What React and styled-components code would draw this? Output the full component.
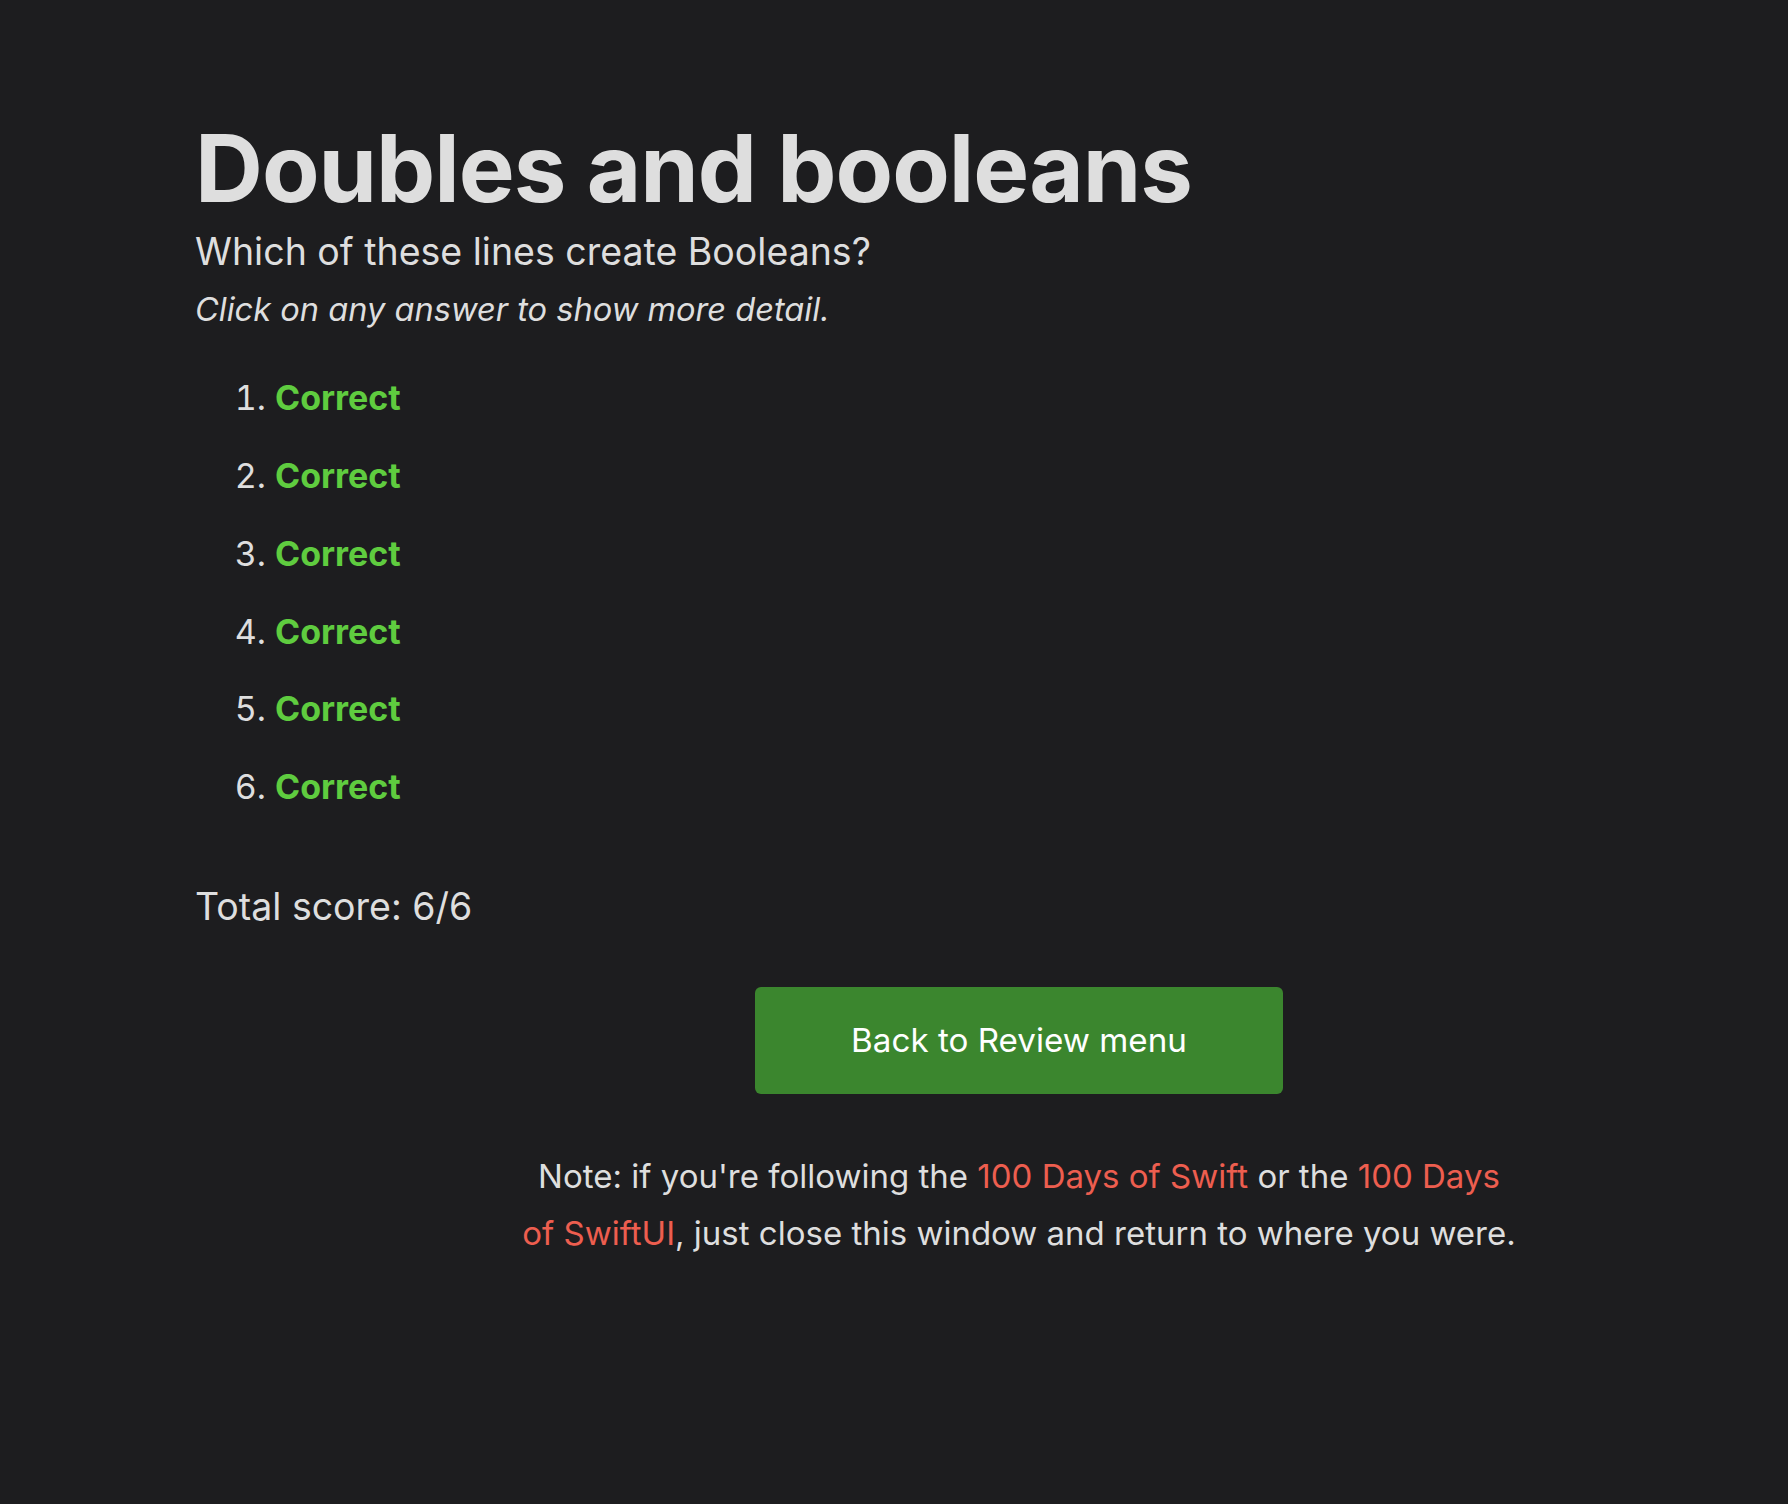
import React from "react";
import styled, { createGlobalStyle } from "styled-components";

const GlobalStyle = createGlobalStyle`
    html, body {
        margin: 0;
        padding: 0;
        background: #1d1d1f;
        overflow-x: hidden;
    }
    body {
        font-family: Inter, "Noto Sans", "Liberation Sans", sans-serif;
        color: #dedede;
    }
`;

const Page = styled.main`
    min-height: 1504px;
    box-sizing: border-box;
    padding: 112px 0 0 195px;
`;

const Title = styled.h1`
    margin: 0;
    font-size: 94px;
    font-weight: 700;
    line-height: 1.2;
    letter-spacing: -1px;
`;

const Question = styled.h2`
    margin: 3px 0 0;
    font-size: 37.5px;
    font-weight: 400;
    line-height: 1.3;
`;

const Hint = styled.p`
    margin: 10px 0 0;
    font-size: 32.6px;
    font-style: italic;
    line-height: 1.4;
`;

const Answers = styled.ol`
    margin: 46px 0 0;
    padding-left: 80px;
    font-size: 34px;
    li {
        line-height: 1.2;
        margin-bottom: 37px;
    }
`;

const Verdict = styled.span`
    font-weight: 700;
    color: ${(p) => (p.$correct ? "#5fcc3f" : "#ed5e4f")};
`;

const Score = styled.p`
    margin: 76px 0 0;
    font-size: 37.5px;
`;

const Footer = styled.section`
    margin: 58px 0 0 55px;
    display: flex;
    flex-direction: column;
    align-items: center;
`;

const BackButton = styled.a`
    display: flex;
    align-items: center;
    justify-content: center;
    width: 528px;
    height: 107px;
    border-radius: 6px;
    background: #3b862e;
    color: #ffffff;
    font-size: 33.2px;
    text-decoration: none;
`;

const Note = styled.p`
    margin: 54px 0 0;
    max-width: 995px;
    text-align: center;
    font-size: 33px;
    line-height: 57px;
    a {
        color: #ed5e4f;
        text-decoration: none;
    }
`;

const results = [true, true, true, true, true, true];

export default function App() {
    return (
        <>
            <GlobalStyle />
            <Page>
                <Title>Doubles and booleans</Title>
                <Question>Which of these lines create Booleans?</Question>
                <Hint>Click on any answer to show more detail.</Hint>
                <Answers>
                    {results.map((ok, i) => (
                        <li key={i}>
                            <Verdict $correct={ok}>{ok ? "Correct" : "Wrong"}</Verdict>
                        </li>
                    ))}
                </Answers>
                <Score>Total score: 6/6</Score>
                <Footer>
                    <BackButton href="#">Back to Review menu</BackButton>
                    <Note>
                        Note: if you're following the <a href="#">100 Days of Swift</a> or the{" "}
                        <a href="#">100 Days of SwiftUI</a>, just close this window and return to where you were.
                    </Note>
                </Footer>
            </Page>
        </>
    );
}
